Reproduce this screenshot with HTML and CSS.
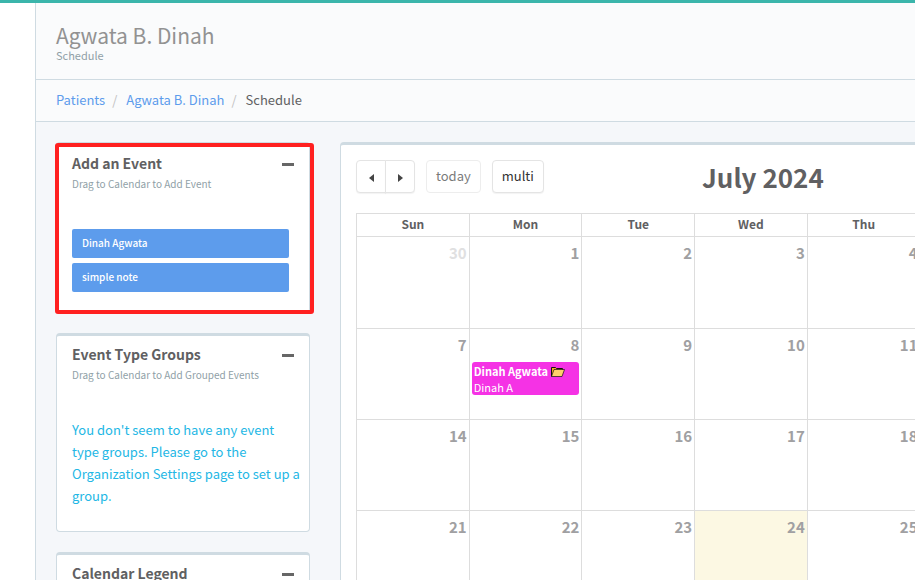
FILE: index.html
```html
<!DOCTYPE html>
<html lang="en">
  <head>
    <meta charset="UTF-8" />
    <title>Schedule</title>
    <meta name="viewport" content="width=device-width, initial-scale=1.0" />
    <link rel="stylesheet" href="styles.css">
  </head>
  <body>
    <div class="page">
      <div class="content">
        <header class="page-header">
          <h1>Agwata B. Dinah</h1>
          <small>Schedule</small>
        </header>

        <nav class="breadcrumb" aria-label="Breadcrumb">
          <a href="#">Patients</a>
          <span class="sep">/</span>
          <a href="#">Agwata B. Dinah</a>
          <span class="sep">/</span>
          <span>Schedule</span>
        </nav>

        <div class="columns">
          <aside class="sidebar">
            <section class="card highlighted">
              <div class="card-head">
                <h2>Add an Event</h2>
                <button class="btn-collapse" aria-label="Collapse"></button>
              </div>
              <p class="hint">Drag to Calendar to Add Event</p>
              <div class="event-list">
                <div class="event-type" draggable="true">Dinah Agwata</div>
                <div class="event-type" draggable="true">simple note</div>
              </div>
            </section>

            <section class="card">
              <div class="card-head">
                <h2>Event Type Groups</h2>
                <button class="btn-collapse" aria-label="Collapse"></button>
              </div>
              <p class="hint">Drag to Calendar to Add Grouped Events</p>
              <p class="info">You don't seem to have any event type groups. Please go to the Organization Settings page to set up a group.</p>
            </section>

            <section class="card">
              <div class="card-head">
                <h2>Calendar Legend</h2>
                <button class="btn-collapse" aria-label="Collapse"></button>
              </div>
            </section>
          </aside>

          <main class="card calendar-card">
            <div class="toolbar">
              <div class="toolbar-left">
                <div class="btn-group">
                  <button class="btn" aria-label="Previous">
                    <svg width="5" height="8" viewBox="0 0 5 8"><path d="M5 0v8L0 4z" fill="#444" /></svg>
                  </button>
                  <button class="btn" aria-label="Next">
                    <svg width="5" height="8" viewBox="0 0 5 8"><path d="M0 0v8l5-4z" fill="#444" /></svg>
                  </button>
                </div>
                <button class="btn" disabled>today</button>
                <button class="btn">multi</button>
              </div>
              <h2 class="month">July 2024</h2>
              <div class="toolbar-right"></div>
            </div>

            <table class="calendar">
              <thead>
                <tr>
                  <th>Sun</th>
                  <th>Mon</th>
                  <th>Tue</th>
                  <th>Wed</th>
                  <th>Thu</th>
                  <th>Fri</th>
                  <th>Sat</th>
                </tr>
              </thead>
              <tbody>
                <tr>
                  <td class="other-month">30</td>
                  <td>1</td>
                  <td>2</td>
                  <td>3</td>
                  <td>4</td>
                  <td>5</td>
                  <td>6</td>
                </tr>
                <tr>
                  <td>7</td>
                  <td>
                    8
                    <div class="event">
                      <strong>Dinah Agwata
                        <svg width="14" height="11" viewBox="0 0 14 11">
                          <path d="M0.500 10.500V1.500h4l1 1h6V4" fill="#f9a825" stroke="#111" />
                          <path d="M0.500 10.500l2.500-7h10.500l-2.500 7z" fill="#ffcf6b" stroke="#111" stroke-width="0.700" />
                        </svg>
                      </strong>
                      <span>Dinah A</span>
                    </div>
                  </td>
                  <td>9</td>
                  <td>10</td>
                  <td>11</td>
                  <td>12</td>
                  <td>13</td>
                </tr>
                <tr>
                  <td>14</td>
                  <td>15</td>
                  <td>16</td>
                  <td>17</td>
                  <td>18</td>
                  <td>19</td>
                  <td>20</td>
                </tr>
                <tr>
                  <td>21</td>
                  <td>22</td>
                  <td>23</td>
                  <td class="today">24</td>
                  <td>25</td>
                  <td>26</td>
                  <td>27</td>
                </tr>
              </tbody>
            </table>
          </main>
        </div>
      </div>
    </div>
  </body>
</html>
```
FILE: styles.css
```css
* {
  box-sizing: border-box;
}

body {
  font-family: "Noto Sans CJK SC", "Noto Sans", sans-serif;
  font-size: 13px;
  line-height: 20px;
  color: #606062;
  background: #fff;
  margin: 0;
  overflow: hidden;
}

h1,
h2,
p {
  margin: 0;
}

a {
  color: #5d9cec;
  text-decoration: none;
}

button {
  font-family: inherit;
  cursor: pointer;
}

.page {
  height: 100vh;
  overflow: hidden;
  border-top: 3px solid #3bb5ab;
  padding-left: 35px;
}

.content {
  min-width: 1147px;
  min-height: 100%;
  background: #f5f7fa;
  border-left: 1px solid #cfdbe2;
}

.page-header {
  padding: 18px 20px 16px;
  background: #fafbfc;
  border-bottom: 1px solid #cfdbe2;
}

.page-header h1 {
  font-size: 21px;
  font-weight: 400;
  line-height: 28px;
  color: #929292;
}

.page-header small {
  display: block;
  padding-bottom: 2px;
  font-size: 11px;
  line-height: 12px;
  color: #909fa7;
}

.breadcrumb {
  display: flex;
  padding: 10px 20px 11px;
  background: #fafbfc;
  border-bottom: 1px solid #cfdbe2;
}

.sep {
  color: #c1c1c1;
  padding: 0 9px 0 7px;
}

.columns {
  display: grid;
  grid-template-columns: 254px 1fr;
  gap: 30px;
  padding: 20px;
  align-items: start;
}

.sidebar {
  display: grid;
  gap: 20px;
}

.card {
  background: #fff;
  border: 1px solid #cfdbe2;
  border-top-width: 3px;
  border-radius: 4px;
  padding: 8px 15px 20px;
  position: relative;
}

/* red frame drawn over the card edges */
.highlighted::after {
  content: "";
  position: absolute;
  inset: -2px -5px -2px -2px;
  border: 4px solid #ff2020;
  border-radius: 3px;
  pointer-events: none;
}

.card-head {
  display: flex;
  justify-content: space-between;
  align-items: flex-end;
}

.card-head h2 {
  font-size: 14px;
  font-weight: 700;
  line-height: 20px;
}

.btn-collapse {
  width: 12px;
  height: 18px;
  padding: 0;
  border: none;
  background: linear-gradient(#666, #666) center / 12px 3px no-repeat;
}

.hint {
  padding-top: 1px;
  font-size: 10px;
  line-height: 20px;
  color: #909fa7;
}

.event-list {
  display: grid;
  gap: 5px;
  margin-top: 35px;
  padding-right: 5px;
}

.event-type {
  padding: 5px 10px 6px;
  border-radius: 2px;
  background: #5d9cec;
  color: #fff;
  font-size: 10px;
  font-weight: 500;
  line-height: 18px;
  cursor: move;
}

.info {
  margin: 34px -10px 0 0;
  padding-bottom: 4px;
  line-height: 22px;
  color: #23b7e5;
}

.calendar-card {
  padding: 15px;
}

.toolbar {
  display: flex;
  justify-content: space-between;
  align-items: center;
  margin-bottom: 20px;
}

.toolbar-left {
  display: flex;
  gap: 11px;
}

.toolbar-right {
  width: 164px;
}

.btn-group {
  display: flex;
}

.btn-group .btn {
  width: 30px;
  padding: 0;
}

.btn-group .btn:first-child {
  border-radius: 4px 0 0 4px;
}

.btn-group .btn:last-child {
  border-radius: 0 4px 4px 0;
  margin-left: -1px;
}

.btn {
  height: 33px;
  padding: 0 9px 2px;
  background: #fff;
  border: 1px solid #e4e4e4;
  border-radius: 4px;
  box-shadow: 0 1px 1px rgba(0, 0, 0, 0.05);
  color: #333;
  font-size: 13px;
}

.btn:disabled {
  opacity: 0.65;
  box-shadow: none;
}

.month {
  font-size: 26px;
  font-weight: 700;
  line-height: 32px;
}

.calendar {
  width: 100%;
  table-layout: fixed;
  border-collapse: collapse;
}

.calendar th,
.calendar td {
  border: 1px solid #ddd;
}

.calendar th {
  height: 23px;
  padding: 0 0 2px;
  font-size: 12px;
  font-weight: 700;
  line-height: 20px;
}

.calendar td {
  height: 91px;
  padding: 6px 2px 0;
  vertical-align: top;
  text-align: right;
  font-size: 15px;
  font-weight: 700;
  color: #a0a0a2;
}

.calendar tbody tr:first-child td {
  height: 92px;
}

.calendar .other-month {
  color: #e0e0e1;
}

.calendar .today {
  background: #fcf8e3;
}

.calendar .event {
  margin-top: 7px;
  padding: 1px 2px 0;
  border-radius: 3px;
  background: #f532e5;
  color: #fff;
  font-size: 11px;
  font-weight: 400;
  line-height: 16px;
  text-align: left;
}

.event strong,
.event span {
  display: block;
}

.event strong {
  height: 16px;
}

.event svg {
  vertical-align: -1px;
}
```
